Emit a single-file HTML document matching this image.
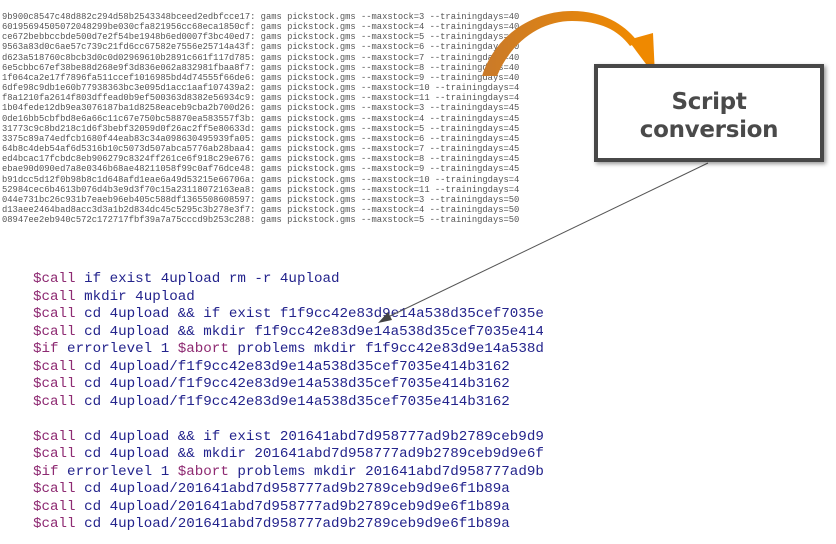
<!DOCTYPE html>
<html><head><style>
body{margin:0;width:836px;height:544px;background:#fff;position:relative;overflow:hidden;font-family:"Liberation Mono",monospace}
#top{position:absolute;left:2px;top:12px;font-size:8.8px;line-height:10.15px;color:#555;white-space:pre;width:518px;overflow:hidden}
#bot{position:absolute;left:33px;top:271px;font-size:14.2px;line-height:17.5px;color:#23238c;white-space:pre;width:510px;overflow:hidden}
#bot b{font-weight:normal;color:#8e2a72}
#box{position:absolute;left:594px;top:64px;width:222px;border:4px solid #484848;background:#fff;box-shadow:2px 2px 4px rgba(0,0,0,.4);text-align:center;font-family:"DejaVu Sans",sans-serif;font-weight:bold;font-size:23px;line-height:28px;color:#4a4a4a;padding-top:20px;height:70px;letter-spacing:-0.3px}
svg{position:absolute;left:0;top:0}
</style></head><body>
<div id="top">9b900c8547c48d882c294d58b2543348bceed2edbfcce17: gams pickstock.gms --maxstock=3 --trainingdays=40
60195694505072048299be030cfa821956cc68eca1850cf: gams pickstock.gms --maxstock=4 --trainingdays=40
ce672bebbccbde500d7e2f54be1948b6ed0007f3bc40ed7: gams pickstock.gms --maxstock=5 --trainingdays=40
9563a83d0c6ae57c739c21fd6cc67582e7556e25714a43f: gams pickstock.gms --maxstock=6 --trainingdays=40
d623a518760c8bcb3d0c0d02969610b2891c661f117d785: gams pickstock.gms --maxstock=7 --trainingdays=40
6e5cbbc67ef38be88d268e9f3d836e062a832981fbaa8f7: gams pickstock.gms --maxstock=8 --trainingdays=40
1f064ca2e17f7896fa511ccef1016985bd4d74555f66de6: gams pickstock.gms --maxstock=9 --trainingdays=40
6dfe98c9db1e60b77938363bc3e095d1acc1aaf107439a2: gams pickstock.gms --maxstock=10 --trainingdays=40
f8a1210fa2614f803dffead0b9ef500363d8382e56934c9: gams pickstock.gms --maxstock=11 --trainingdays=40
1b04fede12db9ea3076187ba1d8258eaceb9cba2b700d26: gams pickstock.gms --maxstock=3 --trainingdays=45
0de16bb5cbfbd8e6a66c11c67e750bc58870ea583557f3b: gams pickstock.gms --maxstock=4 --trainingdays=45
31773c9c8bd218c1d6f3bebf32059d0f26ac2ff5e80633d: gams pickstock.gms --maxstock=5 --trainingdays=45
3375c89a74edfcb1680f44eab83c34a098630495939fa05: gams pickstock.gms --maxstock=6 --trainingdays=45
64b8c4deb54af6d5316b10c5073d507abca5776ab28baa4: gams pickstock.gms --maxstock=7 --trainingdays=45
ed4bcac17fcbdc8eb906279c8324ff261ce6f918c29e676: gams pickstock.gms --maxstock=8 --trainingdays=45
ebae90d090ed7a8e0346b68ae48211058f99c0af76dce48: gams pickstock.gms --maxstock=9 --trainingdays=45
b91dcc5d12f0b98b8c1d648afd1eae6a49d53215e66706a: gams pickstock.gms --maxstock=10 --trainingdays=45
52984cec6b4613b076d4b3e9d3f70c15a23118072163ea8: gams pickstock.gms --maxstock=11 --trainingdays=45
044e731bc26c931b7eaeb96eb405c588df1365508608597: gams pickstock.gms --maxstock=3 --trainingdays=50
d13aee2464bad8acc3d3a1b2d834dc45c5295c3b278e3f7: gams pickstock.gms --maxstock=4 --trainingdays=50
08947ee2eb940c572c172717fbf39a7a75cccd9b253c288: gams pickstock.gms --maxstock=5 --trainingdays=50</div>
<div id="bot"><b>$call</b> if exist 4upload rm -r 4upload
<b>$call</b> mkdir 4upload
<b>$call</b> cd 4upload &amp;&amp; if exist f1f9cc42e83d9e14a538d35cef7035e414b316
<b>$call</b> cd 4upload &amp;&amp; mkdir f1f9cc42e83d9e14a538d35cef7035e414b316
<b>$if</b> errorlevel 1 <b>$abort</b> problems mkdir f1f9cc42e83d9e14a538d35cef7035
<b>$call</b> cd 4upload/f1f9cc42e83d9e14a538d35cef7035e414b3162
<b>$call</b> cd 4upload/f1f9cc42e83d9e14a538d35cef7035e414b3162
<b>$call</b> cd 4upload/f1f9cc42e83d9e14a538d35cef7035e414b3162

<b>$call</b> cd 4upload &amp;&amp; if exist 201641abd7d958777ad9b2789ceb9d9e6f1b89a
<b>$call</b> cd 4upload &amp;&amp; mkdir 201641abd7d958777ad9b2789ceb9d9e6f1b89a
<b>$if</b> errorlevel 1 <b>$abort</b> problems mkdir 201641abd7d958777ad9b2789ceb9d9e
<b>$call</b> cd 4upload/201641abd7d958777ad9b2789ceb9d9e6f1b89a
<b>$call</b> cd 4upload/201641abd7d958777ad9b2789ceb9d9e6f1b89a
<b>$call</b> cd 4upload/201641abd7d958777ad9b2789ceb9d9e6f1b89a</div>
<svg width="836" height="544">
<defs><linearGradient id="g" x1="0" x2="1"><stop offset="0" stop-color="#c97a2a"/><stop offset="1" stop-color="#f08a00"/></linearGradient></defs>
<path d="M482 76 C494 38 530 11 572 11 C605 11 626 26 638 42 L630 46 C618 30 600 21 572 21 C542 21 512 40 497 76 Z" fill="url(#g)"/>
<path d="M628 40 L653 33 L655 76 Z" fill="#ef8900"/>
<line x1="708" y1="163" x2="386" y2="318" stroke="#555" stroke-width="1"/>
<path d="M378 323 L388 312 L392 320 Z" fill="#444"/>
</svg>
<div id="box">Script<br>conversion</div>
</body></html>
